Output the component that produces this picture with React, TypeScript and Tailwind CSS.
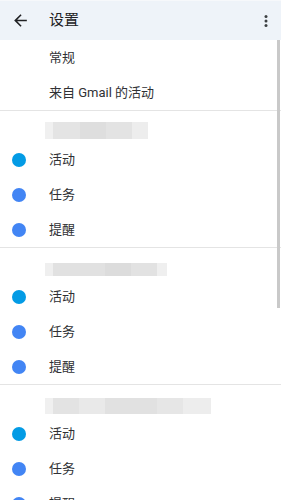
import React from "react";

const font = { fontFamily: '"Roboto", "Noto Sans CJK SC", sans-serif' };

function Placeholder({ segs }: { segs: { w: number; c: string }[] }) {
  return (
    <div className="flex h-full">
      {segs.map((s, i) => (
        <div key={i} style={{ width: s.w, backgroundColor: s.c }} />
      ))}
    </div>
  );
}

function Row({ dot, label }: { dot?: string; label: string }) {
  return (
    <div className="flex h-[35px] items-center">
      <div className="flex w-[49px] shrink-0 items-center pl-[12px]">
        {dot && <div className="h-[14px] w-[14px] rounded-full" style={{ backgroundColor: dot }} />}
      </div>
      <span className="text-[13px] text-[#303134]">{label}</span>
    </div>
  );
}

function Section({ segs, h, top }: { segs: { w: number; c: string }[]; h: number; top: number }) {
  return (
    <div className="border-b border-[#e4e4e4]">
      <div className="h-[31px] pl-[45px]" style={{ paddingTop: top }}>
        <div style={{ height: h }}>
          <Placeholder segs={segs} />
        </div>
      </div>
      <Row dot="#039be5" label="活动" />
      <Row dot="#4285f4" label="任务" />
      <Row dot="#4285f4" label="提醒" />
    </div>
  );
}

export default function App() {
  return (
    <div className="relative h-[500px] w-[281px] overflow-hidden bg-white" style={font}>
      <div className="flex h-[40px] items-center border-t border-[#f6f8fb] bg-[#eef3f9]">
        <div className="flex w-[49px] shrink-0 items-center pl-[11px]">
          <svg width="19" height="19" viewBox="0 0 24 24" fill="#202124">
            <path d="M20 11H7.83l5.59-5.59L12 4l-8 8 8 8 1.41-1.41L7.83 13H20v-2z" />
          </svg>
        </div>
        <span className="flex-1 text-[15px] text-[#202124]">设置</span>
        <div className="flex w-[30px] justify-center pr-[1px]">
          <svg width="4" height="12" viewBox="0 0 4 12" fill="#3c4043">
            <circle cx="2" cy="1.6" r="1.5" />
            <circle cx="2" cy="6" r="1.5" />
            <circle cx="2" cy="10.4" r="1.5" />
          </svg>
        </div>
      </div>
      <div className="border-b border-[#e4e4e4]">
        <Row label="常规" />
        <Row label="来自 Gmail 的活动" />
      </div>
      <Section
        top={11}
        h={17}
        segs={[
          { w: 8, c: "#f0f0f0" },
          { w: 27, c: "#e4e4e4" },
          { w: 26, c: "#dedede" },
          { w: 26, c: "#e3e3e3" },
          { w: 16, c: "#ededed" },
        ]}
      />
      <Section
        top={15}
        h={13}
        segs={[
          { w: 8, c: "#efefef" },
          { w: 52, c: "#e1e1e1" },
          { w: 26, c: "#dcdcdc" },
          { w: 26, c: "#e2e2e2" },
          { w: 10, c: "#efefef" },
        ]}
      />
      <Section
        top={13}
        h={16}
        segs={[
          { w: 8, c: "#f0f0f0" },
          { w: 26, c: "#e3e3e3" },
          { w: 26, c: "#e9e9e9" },
          { w: 52, c: "#e1e1e1" },
          { w: 26, c: "#e6e6e6" },
          { w: 28, c: "#ededed" },
        ]}
      />
      <div className="absolute right-[1px] top-[40px] h-[268px] w-[3px] bg-[#c9c9c9]" />
    </div>
  );
}
